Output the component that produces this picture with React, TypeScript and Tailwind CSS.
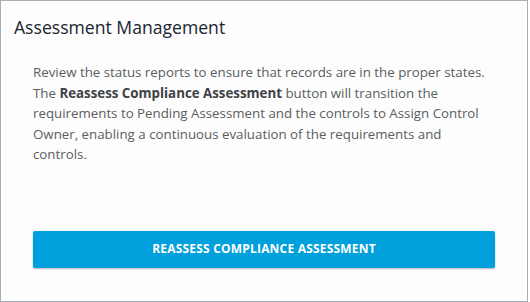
import React from 'react';

export default function App() {
    return (
        <div className="w-[530px] h-[302px] bg-white">
            <div className="w-[528px] h-[302px] border border-[#a9aeb4] bg-[#fdfdfd] flex flex-col" style={{ fontFamily: '"Open Sans", Lato, sans-serif' }}>
                <h1 className="pl-[13px] pt-[15px] text-[17.6px] leading-[22px] font-medium text-[#1b2530]">Assessment Management</h1>

                <div className="px-[32px] pt-[24px] flex flex-col flex-1">
                    <p className="text-[13.3px] leading-[20.6px] text-[#5a5d61] whitespace-nowrap">
                        Review the status reports to ensure that records are in the proper states.
                        <br />
                        The <span className="font-bold text-[#3f4246]">Reassess Compliance Assessment</span> button will transition the
                        <br />
                        requirements to Pending Assessment and the controls to Assign Control
                        <br />
                        Owner, enabling a continuous evaluation of the requirements and
                        <br />
                        controls.
                    </p>

                    <button
                        type="button"
                        className="mt-[66px] h-[37px] w-[462px] rounded-[2px] bg-[#00a0dc] text-white text-[12px] font-bold tracking-[0.2px] shadow-[0_1px_2px_rgba(0,0,0,0.3)]"
                    >
                        REASSESS COMPLIANCE ASSESSMENT
                    </button>
                </div>
            </div>
        </div>
    );
}
